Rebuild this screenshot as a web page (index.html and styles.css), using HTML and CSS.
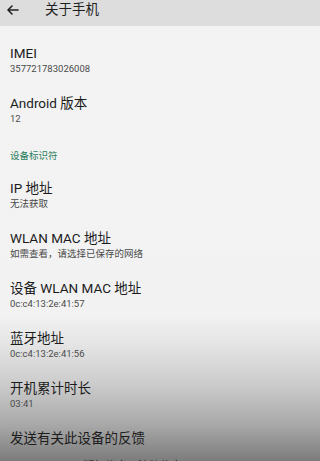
FILE: index.html
```html
<!DOCTYPE html>
<html lang="zh-CN">
<head>
<meta charset="utf-8">
<title>关于手机</title>
<link rel="stylesheet" href="styles.css">
</head>
<body>
<div class="screen">
  <header class="appbar">
    <svg class="back" width="12" height="10" viewBox="0 0 12 10"><path d="M11 5H1.5M5 1L1 5l4 4" fill="none" stroke="#222" stroke-width="1.6" stroke-linecap="round" stroke-linejoin="round"/></svg>
    <h1 class="title">关于手机</h1>
  </header>
  <main class="list">
    <div class="item"><div class="item-title">IMEI</div><div class="item-sub">357721783026008</div></div>
    <div class="item"><div class="item-title">Android 版本</div><div class="item-sub">12</div></div>
    <div class="category">设备标识符</div>
    <div class="item"><div class="item-title">IP 地址</div><div class="item-sub">无法获取</div></div>
    <div class="item"><div class="item-title">WLAN MAC 地址</div><div class="item-sub">如需查看，请选择已保存的网络</div></div>
    <div class="item"><div class="item-title">设备 WLAN MAC 地址</div><div class="item-sub">0c:c4:13:2e:41:57</div></div>
    <div class="item"><div class="item-title">蓝牙地址</div><div class="item-sub">0c:c4:13:2e:41:56</div></div>
    <div class="item"><div class="item-title">开机累计时长</div><div class="item-sub">03:41</div></div>
    <div class="item item-last"><div class="item-title">发送有关此设备的反馈</div></div>
    <div class="footer-note">版权信息及法律信息</div>
  </main>
</div>
</body>
</html>
```

FILE: styles.css
```css
html, body {
  margin: 0;
  padding: 0;
  height: 100%;
  overflow: hidden;
}
body {
  font-family: Roboto, "Noto Sans CJK SC", sans-serif;
  color: #1c1c1c;
  background: linear-gradient(to bottom, #f3f3f3 0, #f2f2f2 315px, #e4e4e4 345px, #cbcbcb 385px, #a8a8a8 425px, #7c7c7c 461px);
}
.screen {
  height: 461px;
  display: flex;
  flex-direction: column;
}
.appbar {
  height: 26px;
  flex: none;
  background: #dddddd;
  display: flex;
  align-items: center;
  padding-left: 7px;
  gap: 26px;
}
.back {
  display: block;
  margin-top: -7px;
}
.title {
  margin: -7px 0 0 0;
  font-size: 13.5px;
  font-weight: 400;
  line-height: 17px;
  color: #1f1f1f;
}
.list {
  padding-top: 9px;
}
.item {
  padding: 10px 10px;
  height: 30px;
}
.item-title {
  font-size: 13.5px;
  line-height: 17px;
  white-space: nowrap;
}
.item-sub {
  font-size: 9.5px;
  line-height: 13px;
  color: #4a4a4a;
  white-space: nowrap;
}
.item-last {
  height: 17px;
}
.category {
  height: 35px;
  box-sizing: border-box;
  padding: 15px 10px 0;
  font-size: 9.5px;
  line-height: 12px;
  color: #2a7d5c;
}
.footer-note {
  padding: 3px 0 0 83px;
  font-size: 11px;
  line-height: 14px;
  color: #222;
}
```
